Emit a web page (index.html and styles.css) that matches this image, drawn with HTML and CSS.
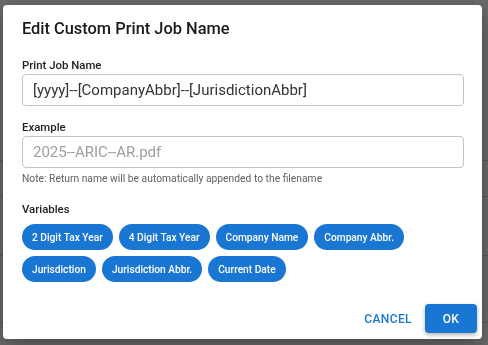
FILE: index.html
```html
<!DOCTYPE html>
<html lang="en">
<head>
    <meta charset="UTF-8">
    <meta name="viewport" content="width=device-width, initial-scale=1.0">
    <title>Edit Custom Print Job Name</title>
    <link rel="stylesheet" href="styles.css">
</head>
<body>
    <div class="page">
        <div class="page-row row-a"></div>
        <div class="page-row row-b"></div>
        <div class="page-row row-c"></div>
        <div class="page-row row-d"></div>
    </div>

    <div class="backdrop">
        <div class="dialog">
            <h2 class="dialog-title">Edit Custom Print Job Name</h2>

            <label class="field-label" for="jobName">Print Job Name</label>
            <input class="field-input" type="text" id="jobName" value="[yyyy]--[CompanyAbbr]--[JurisdictionAbbr]" />

            <label class="field-label label-gap" for="example">Example</label>
            <input class="field-input example" type="text" id="example" placeholder="2025--ARIC--AR.pdf" readonly />
            <div class="note">Note: Return name will be automatically appended to the filename</div>

            <div class="field-label vars-label">Variables</div>
            <div class="chips">
                <button class="chip">2 Digit Tax Year</button>
                <button class="chip">4 Digit Tax Year</button>
                <button class="chip">Company Name</button>
                <button class="chip">Company Abbr.</button>
                <button class="chip">Jurisdiction</button>
                <button class="chip">Jurisdiction Abbr.</button>
                <button class="chip">Current Date</button>
            </div>

            <div class="actions">
                <button class="btn-text">Cancel</button>
                <button class="btn-primary">OK</button>
            </div>
        </div>
    </div>
</body>
</html>
```

FILE: styles.css
```css
body{
    margin: 0;
    font-family: "Roboto", "Liberation Sans", sans-serif;
    background-color: #6b6b6b;
    color: #212121;
}
.page{
    height: 345px;
    overflow: hidden;
}
.page-row{
    border-bottom: 1px solid #5a5a5a;
}
.row-a{
    height: 160px;
}
.row-b{
    height: 35px;
}
.row-c{
    height: 58px;
}
.row-d{
    height: 66px;
}
.backdrop{
    position: fixed;
    inset: 0;
}
.dialog{
    box-sizing: border-box;
    width: 479px;
    height: 334px;
    margin: 5px 0 0 3px;
    padding: 13px 18px 6px 19px;
    background-color: #fff;
    border-radius: 4px;
    box-shadow: 0 6px 20px rgba(0, 0, 0, 0.35);
    display: flex;
    flex-direction: column;
}
.dialog-title{
    margin: 0;
    font-size: 16.4px;
    line-height: 22px;
    font-weight: 500;
    color: #1a1a1a;
}
.field-label{
    display: block;
    margin-top: 17px;
    font-size: 11.4px;
    line-height: 16px;
    font-weight: 500;
    color: #212121;
}
.label-gap{
    margin-top: 13px;
}
.field-input{
    box-sizing: border-box;
    width: 100%;
    height: 32px;
    margin-top: 1px;
    padding: 0 10px;
    border: 1px solid #c4c4c4;
    border-radius: 4px;
    font-family: inherit;
    font-size: 15px;
    color: #333;
    outline: none;
}
.example::placeholder{
    color: #9e9e9e;
}
.note{
    margin-top: 4px;
    font-size: 10.3px;
    line-height: 14px;
    color: #616161;
}
.vars-label{
    margin-top: 15px;
}
.chips{
    display: flex;
    flex-wrap: wrap;
    gap: 6px;
    margin-top: 7px;
}
.chip{
    height: 26px;
    padding: 0 10px;
    border: none;
    border-radius: 13px;
    background-color: #1976d2;
    color: #fff;
    font-family: inherit;
    font-size: 10.2px;
    font-weight: 500;
    cursor: pointer;
}
.actions{
    display: flex;
    justify-content: flex-end;
    align-items: center;
    margin-top: auto;
    margin-right: -13px;
    gap: 5px;
}
.btn-text,
.btn-primary{
    height: 29px;
    padding: 0 8px;
    border: none;
    border-radius: 4px;
    font-family: inherit;
    font-size: 12px;
    font-weight: 500;
    text-transform: uppercase;
    letter-spacing: 0.4px;
    cursor: pointer;
}
.btn-text{
    background: none;
    color: #1976d2;
}
.btn-primary{
    width: 52px;
    background-color: #1976d2;
    color: #fff;
    box-shadow: 0 2px 4px rgba(0, 0, 0, 0.3);
}
```
